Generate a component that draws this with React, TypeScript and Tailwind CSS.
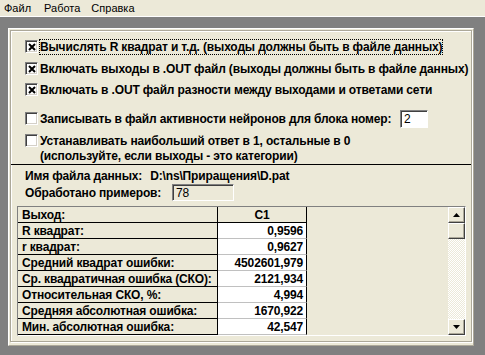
import React from "react";

const face = "bg-[#ECE9D8]";

function Check({ on }: { on?: boolean }) {
  return (
    <div className="w-[13px] h-[13px] shrink-0 bg-white border border-t-[#808080] border-l-[#808080] border-r-white border-b-white shadow-[inset_1px_1px_0_#404040,inset_-1px_-1px_0_#d4d0c8] flex items-center justify-center">
      {on && (
        <svg width="8" height="8" viewBox="0 0 8 8">
          <path d="M1 1 L7 7 M7 1 L1 7" stroke="#000" strokeWidth="2" />
        </svg>
      )}
    </div>
  );
}

const rows: [string, string][] = [
  ["R квадрат:", "0,9596"],
  ["r квадрат:", "0,9627"],
  ["Средний квадрат ошибки:", "4502601,979"],
  ["Ср. квадратичная ошибка (СКО):", "2121,934"],
  ["Относительная СКО, %:", "4,994"],
  ["Средняя абсолютная ошибка:", "1670,922"],
  ["Мин. абсолютная ошибка:", "42,547"],
];

function ScrollBtn({ up }: { up?: boolean }) {
  return (
    <div className={`h-[16px] ${face} border border-t-white border-l-white border-r-[#404040] border-b-[#404040] shadow-[inset_-1px_-1px_0_#aca899] flex items-center justify-center`}>
      {up !== undefined && (
        <svg width="7" height="4" viewBox="0 0 7 4">
          <path d={up ? "M3.5 0 L7 4 L0 4 Z" : "M0 0 L7 0 L3.5 4 Z"} fill="#000" />
        </svg>
      )}
    </div>
  );
}

export default function App() {
  return (
    <div className="w-[485px] h-[355px] bg-[#808080] overflow-hidden font-['Liberation_Sans',Arial,sans-serif] text-black">
      {/* menu */}
      <div className={`h-[17px] ${face} border-b border-white flex items-center text-[11px] leading-none`}>
        <span className="ml-[4px]">Файл</span>
        <span className="ml-[13px]">Работа</span>
        <span className="ml-[11px]">Справка</span>
      </div>

      <div className="pt-[11px] pl-[8px]">
        <div className={`w-[466px] h-[318px] ${face} border border-t-white border-l-white border-r-[#aca899] border-b-[#aca899] p-[1px]`}>
          <div className="h-[312px] border border-[#aca899] shadow-[inset_1px_1px_0_#fff,1px_1px_0_#fff] text-[12px] font-bold leading-none tracking-[-0.15px] whitespace-nowrap">
            <div className="pl-[14px] pt-[9px] flex flex-col">
              <div className="flex items-center h-[13px]">
                <Check on />
                <span className="ml-[1px] px-[1px] py-[2px] outline outline-1 outline-dotted outline-black -outline-offset-1">
                  Вычислять R квадрат и т.д. (выходы должны быть в файле данных)
                </span>
              </div>
              <div className="flex items-center h-[13px] mt-[9px]">
                <Check on />
                <span className="ml-[2px]">Включать выходы в .OUT файл (выходы должны быть в файле данных)</span>
              </div>
              <div className="flex items-center h-[13px] mt-[8px]">
                <Check on />
                <span className="ml-[2px]">Включать в .OUT файл разности между выходами и ответами сети</span>
              </div>
              <div className="flex items-center h-[13px] mt-[16px]">
                <Check />
                <span className="ml-[2px] w-[358px]">Записывать в файл активности нейронов для блока номер:</span>
                <div className="ml-[2px] w-[28px] h-[18px] bg-white border border-t-[#808080] border-l-[#808080] border-r-white border-b-white shadow-[inset_1px_1px_0_#404040] flex items-center pl-[3px] font-normal">
                  2
                </div>
              </div>
              <div className="flex items-center h-[13px] mt-[9px]">
                <Check />
                <span className="ml-[2px]">Устанавливать наибольший ответ в 1, остальные в 0</span>
              </div>
              <div className="ml-[15px] mt-[3px] h-[12px]">(используйте, если выходы - это категории)</div>
            </div>

            <div className="h-px bg-black mt-[2px]" />

            <div className="pl-[14px] mt-[5px] flex items-center h-[12px]">
              <span>Имя файла данных:</span>
              <span className="ml-[8px]">D:\ns\Приращения\D.pat</span>
            </div>
            <div className="pl-[14px] mt-[2px] flex items-center h-[17px]">
              <span className="w-[147px]">Обработано примеров:</span>
              <div className="w-[62px] h-[17px] border border-t-[#808080] border-l-[#808080] border-r-white border-b-white shadow-[inset_1px_1px_0_#404040] flex items-center pl-[3px] font-normal">
                78
              </div>
            </div>

            {/* table */}
            <div className="ml-[6px] mt-[5px] w-[449px] h-[130px] border border-t-[#808080] border-l-[#808080] border-r-white border-b-white flex overflow-hidden">
              <div className="flex flex-col w-[289px]">
                <div className="flex h-[16px] shrink-0">
                  <div className={`w-[200px] ${face} border-r border-b border-black pl-[4px] flex items-center`}>Выход:</div>
                  <div className={`w-[89px] ${face} border-r border-b border-black flex items-center justify-center`}>C1</div>
                </div>
                {rows.map(([k, v]) => (
                  <div key={k} className="flex h-[16px] shrink-0">
                    <div className={`w-[200px] ${face} border-r border-b border-black pl-[4px] flex items-center`}>{k}</div>
                    <div className="w-[89px] bg-white border-r border-black border-b border-b-[#c0c0c0] flex items-center justify-end pr-[3px]">{v}</div>
                  </div>
                ))}
              </div>
              <div className={`flex-1 ${face}`} />
              <div className="w-[17px] flex flex-col">
                <ScrollBtn up />
                <ScrollBtn />
                <div className="flex-1 bg-[repeating-conic-gradient(#fff_0_25%,#ECE9D8_0_50%)] bg-[length:2px_2px]" />
                <ScrollBtn up={false} />
              </div>
            </div>
          </div>
        </div>
      </div>
    </div>
  );
}
